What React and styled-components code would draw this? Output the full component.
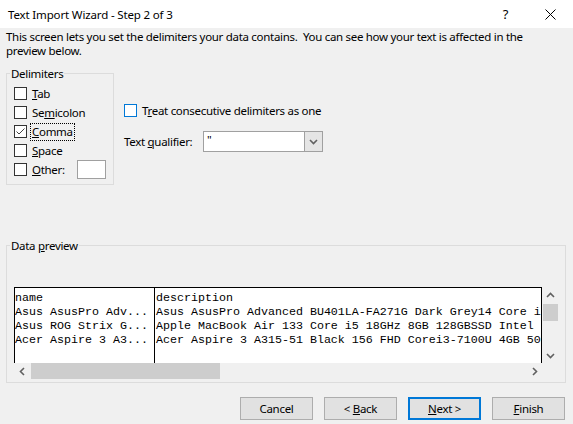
import React from 'react';
import styled, { createGlobalStyle } from 'styled-components';

const GlobalStyle = createGlobalStyle`
  html, body {
    margin: 0;
    padding: 0;
    background: #f0f0f0;
  }
  body {
    font-family: "Noto Sans", "Segoe UI", sans-serif;
    font-size: 11.5px;
    letter-spacing: -0.3px;
    color: #000;
  }
`;

const Window = styled.div`
  width: 573px;
  height: 424px;
  background: #f0f0f0;
  display: flex;
  flex-direction: column;
  overflow: hidden;
`;

const TitleBar = styled.div`
  height: 28px;
  background: #fff;
  display: flex;
  align-items: center;
  padding-left: 8px;
  flex-shrink: 0;
`;

const TitleText = styled.div`
  flex: 1;
  font-size: 11.5px;
  letter-spacing: -0.15px;
  color: #000;
`;

const CaptionButton = styled.div`
  width: 45px;
  height: 28px;
  display: flex;
  align-items: center;
  justify-content: center;
  color: #000;
  font-size: 13px;
`;

const Body = styled.div`
  padding: 0 8px 0 6px;
  display: flex;
  flex-direction: column;
`;

const Description = styled.p`
  margin: 0;
  padding-top: 2px;
  line-height: 14px;
  white-space: nowrap;
`;

const TopRow = styled.div`
  display: flex;
  margin-top: 8px;
`;

const Group = styled.fieldset`
  margin: 0;
  border: 1px solid #dcdcdc;
  min-inline-size: 0;
  width: ${p => p.$width}px;
  box-sizing: border-box;
  padding: ${p => p.$pad};
`;

const Legend = styled.legend`
  margin-left: -4px;
  padding: 0 1px;
  line-height: 15px;
`;

const CheckRow = styled.label`
  display: flex;
  align-items: center;
  height: 19px;
  gap: 5px;
`;

const Box = styled.span`
  width: 13px;
  height: 13px;
  box-sizing: border-box;
  border: 1px solid ${p => (p.$focus ? '#0078d7' : '#333')};
  background: #fff;
  display: inline-flex;
  flex-shrink: 0;
`;

const Focus = styled.span`
  outline: 1px dotted #000;
  outline-offset: 0;
  padding: 0 1px;
  margin-left: -1px;
  line-height: 16px;
`;

const SmallInput = styled.span`
  width: 29px;
  height: 19px;
  box-sizing: border-box;
  border: 1px solid #a0a0a0;
  background: #fff;
  margin-left: auto;
  margin-right: 7px;
`;

const RightColumn = styled.div`
  margin-left: 10px;
  padding-top: 35px;
  display: flex;
  flex-direction: column;
  gap: 11px;
`;

const QualifierRow = styled.div`
  display: flex;
  align-items: center;
  height: 21px;
`;

const QualifierLabel = styled.span`
  width: 79px;
`;

const Combo = styled.div`
  width: 120px;
  height: 21px;
  box-sizing: border-box;
  border: 1px solid #a0a0a0;
  background: #fff;
  display: flex;
`;

const ComboValue = styled.span`
  flex: 1;
  padding-left: 3px;
  line-height: 16px;
`;

const ComboButton = styled.span`
  width: 17px;
  background: #e5e5e5;
  border-left: 1px solid #a0a0a0;
  display: flex;
  align-items: center;
  justify-content: center;
`;

const PreviewGroup = styled(Group)`
  margin-top: 53px;
`;

const Preview = styled.div`
  display: grid;
  grid-template-columns: 528px 16px;
  grid-template-rows: 76px 16px;
  width: 544px;
`;

const Sheet = styled.div`
  background: #fff;
  border: 1px solid #000;
  border-bottom: none;
  display: flex;
  overflow: hidden;
  font-family: "Liberation Mono", "Courier New", monospace;
  font-size: 11.67px;
  letter-spacing: 0;
  line-height: 14px;
`;

const Column = styled.div`
  box-sizing: border-box;
  width: ${p => (p.$width ? `${p.$width}px` : 'auto')};
  flex: ${p => (p.$width ? '0 0 auto' : '1')};
  border-right: ${p => (p.$divider ? '1px solid #000' : 'none')};
  padding: 3px 0 0 ${p => (p.$divider ? 0 : 1)}px;
  white-space: nowrap;
  overflow: hidden;
`;

const ScrollV = styled.div`
  display: flex;
  flex-direction: column;
  align-items: stretch;
`;

const ScrollH = styled.div`
  display: flex;
  align-items: stretch;
`;

const Arrow = styled.div`
  width: 16px;
  height: 16px;
  display: flex;
  align-items: center;
  justify-content: center;
  flex-shrink: 0;
`;

const Thumb = styled.div`
  background: #cdcdcd;
  flex-shrink: 0;
  width: ${p => p.$w};
  height: ${p => p.$h};
  margin: ${p => p.$m};
`;

const Filler = styled.div`
  flex: 1;
`;

const ButtonRow = styled.div`
  display: flex;
  justify-content: flex-end;
  gap: 11px;
  margin-top: 14px;
`;

const Button = styled.button`
  width: 73px;
  height: 23px;
  box-sizing: border-box;
  background: #e1e1e1;
  border: ${p => (p.$default ? '2px solid #0078d7' : '1px solid #adadad')};
  font-family: inherit;
  font-size: 11.5px;
  letter-spacing: inherit;
  color: #000;
  padding: 0;
`;

const Chevron = ({ dir }) => {
  const pts = {
    up: '1,6 4.5,2.5 8,6',
    down: '1,3 4.5,6.5 8,3',
    left: '6,1 2.5,4.5 6,8',
    right: '3,1 6.5,4.5 3,8',
  }[dir];
  return (
    <svg width="9" height="9" viewBox="0 0 9 9">
      <polyline points={pts} fill="none" stroke="#606060" strokeWidth="1.6" />
    </svg>
  );
};

const Check = () => (
  <svg width="11" height="11" viewBox="0 0 11 11">
    <polyline points="1.5,5.5 4,8 9.5,2.5" fill="none" stroke="#444" strokeWidth="1" />
  </svg>
);

const delimiters = [
  { key: 'tab', label: <><u>T</u>ab</> },
  { key: 'semi', label: <>Se<u>m</u>icolon</> },
  { key: 'comma', label: <><u>C</u>omma</>, checked: true },
  { key: 'space', label: <><u>S</u>pace</> },
];

const names = ['name', 'Asus AsusPro Adv...', 'Asus ROG Strix G...', 'Acer Aspire 3 A3...'];
const descriptions = [
  'description',
  'Asus AsusPro Advanced BU401LA-FA271G Dark Grey14 Core i5-8250U 8GB',
  'Apple MacBook Air 133 Core i5 18GHz 8GB 128GBSSD Intel HD 6000',
  'Acer Aspire 3 A315-51 Black 156 FHD Corei3-7100U 4GB 500GB',
];

export default function App() {
  return (
    <Window>
      <GlobalStyle />
      <TitleBar>
        <TitleText>Text Import Wizard - Step 2 of 3</TitleText>
        <CaptionButton>?</CaptionButton>
        <CaptionButton>
          <svg width="11" height="11" viewBox="0 0 11 11">
            <path d="M0.5 0.5 L10.5 10.5 M10.5 0.5 L0.5 10.5" stroke="#000" strokeWidth="1" />
          </svg>
        </CaptionButton>
      </TitleBar>
      <Body>
        <Description>
          This screen lets you set the delimiters your data contains.&nbsp; You can see how your text is affected in the
          <br />
          preview below.
        </Description>
        <TopRow>
          <Group $width={108} $pad="3px 0 5px 7px">
            <Legend>Delimiters</Legend>
            {delimiters.map(d => (
              <CheckRow key={d.key}>
                <Box>{d.checked && <Check />}</Box>
                {d.checked ? <Focus>{d.label}</Focus> : <span>{d.label}</span>}
              </CheckRow>
            ))}
            <CheckRow>
              <Box />
              <span><u>O</u>ther:</span>
              <SmallInput />
            </CheckRow>
          </Group>
          <RightColumn>
            <CheckRow>
              <Box $focus />
              <span>T<u>r</u>eat consecutive delimiters as one</span>
            </CheckRow>
            <QualifierRow>
              <QualifierLabel>Text <u>q</u>ualifier:</QualifierLabel>
              <Combo>
                <ComboValue>"</ComboValue>
                <ComboButton>
                  <Chevron dir="down" />
                </ComboButton>
              </Combo>
            </QualifierRow>
          </RightColumn>
        </TopRow>
        <PreviewGroup $width={560} $pad="34px 0 3px 7px">
          <Legend>Data <u>p</u>review</Legend>
          <Preview>
            <Sheet>
              <Column $width={140} $divider>
                {names.map(n => <div key={n}>{n}</div>)}
              </Column>
              <Column>
                {descriptions.map(d => <div key={d}>{d}</div>)}
              </Column>
            </Sheet>
            <ScrollV>
              <Arrow><Chevron dir="up" /></Arrow>
              <Thumb $w="15px" $h="17px" $m="1px 0 0 1px" />
              <Filler />
              <Arrow><Chevron dir="down" /></Arrow>
            </ScrollV>
            <ScrollH>
              <Arrow><Chevron dir="left" /></Arrow>
              <Thumb $w="189px" $h="16px" $m="0 0 0 1px" />
              <Filler />
              <Arrow><Chevron dir="right" /></Arrow>
            </ScrollH>
            <div />
          </Preview>
        </PreviewGroup>
        <ButtonRow>
          <Button>Cancel</Button>
          <Button>&lt; <u>B</u>ack</Button>
          <Button $default><u>N</u>ext &gt;</Button>
          <Button><u>F</u>inish</Button>
        </ButtonRow>
      </Body>
    </Window>
  );
}
